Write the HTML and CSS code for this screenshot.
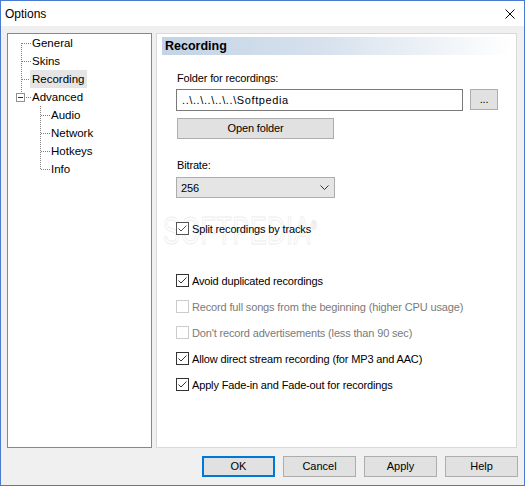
FILE: index.html
```html
<!DOCTYPE html>
<html>
<head>
<meta charset="utf-8">
<link rel="stylesheet" href="styles.css">
</head>
<body>
<div class="window">
  <div class="titlebar">
    <span class="title">Options</span>
    <svg class="close" width="10" height="10" viewBox="0 0 10 10"><path d="M0.5 0.5 L9.5 9.5 M9.5 0.5 L0.5 9.5" stroke="#000" stroke-width="1" fill="none"/></svg>
  </div>
  <div class="main">
    <div class="tree">
      <svg class="tree-lines" width="143" height="413" viewBox="0 0 143 413">
        <g stroke="#808080" stroke-width="1" stroke-dasharray="1 1" fill="none" shape-rendering="crispEdges">
          <line x1="13.5" y1="9" x2="13.5" y2="59"/>
          <line x1="14" y1="9.5" x2="23" y2="9.5"/>
          <line x1="14" y1="27.5" x2="23" y2="27.5"/>
          <line x1="14" y1="45.5" x2="23" y2="45.5"/>
          <line x1="18" y1="63.5" x2="23" y2="63.5"/>
          <line x1="32.5" y1="72" x2="32.5" y2="136"/>
          <line x1="33" y1="81.5" x2="42" y2="81.5"/>
          <line x1="33" y1="99.5" x2="42" y2="99.5"/>
          <line x1="33" y1="117.5" x2="42" y2="117.5"/>
          <line x1="33" y1="135.5" x2="42" y2="135.5"/>
        </g>
        <rect x="8.5" y="59.5" width="8" height="8" fill="#fff" stroke="#919191" shape-rendering="crispEdges"/>
        <line x1="10" y1="63.5" x2="15" y2="63.5" stroke="#1f2f5f" shape-rendering="crispEdges"/>
      </svg>
      <div class="node"><span class="label">General</span></div>
      <div class="node"><span class="label">Skins</span></div>
      <div class="node"><span class="label selected">Recording</span></div>
      <div class="node"><span class="label">Advanced</span></div>
      <div class="node child"><span class="label">Audio</span></div>
      <div class="node child"><span class="label">Network</span></div>
      <div class="node child"><span class="label">Hotkeys</span></div>
      <div class="node child"><span class="label">Info</span></div>
    </div>
    <div class="panel">
      <div class="header">Recording</div>
      <div class="content">
        <div class="field-label">Folder for recordings:</div>
        <div class="folder-row">
          <div class="textbox">..\..\..\..\..\Softpedia</div>
          <div class="btn browse">...</div>
        </div>
        <div class="btn open">Open folder</div>
        <div class="field-label bitrate-label">Bitrate:</div>
        <div class="combo">
          <span>256</span>
          <svg width="9" height="5" viewBox="0 0 9 5"><path d="M0.5 0.5 L4.5 4.5 L8.5 0.5" stroke="#333" stroke-width="1" fill="none"/></svg>
        </div>
        <div class="check split">
          <span class="box checked"><svg width="11" height="11" viewBox="0 0 11 11"><path d="M1.5 5.5 L4 8 L9.5 2.5" stroke="#555" stroke-width="1" fill="none"/></svg></span>
          <span>Split recordings by tracks</span>
        </div>
        <div class="check first">
          <span class="box checked"><svg width="11" height="11" viewBox="0 0 11 11"><path d="M1.5 5.5 L4 8 L9.5 2.5" stroke="#333" stroke-width="1" fill="none"/></svg></span>
          <span>Avoid duplicated recordings</span>
        </div>
        <div class="check disabled">
          <span class="box"></span>
          <span>Record full songs from the beginning (higher CPU usage)</span>
        </div>
        <div class="check disabled">
          <span class="box"></span>
          <span>Don't record advertisements (less than 90 sec)</span>
        </div>
        <div class="check">
          <span class="box checked"><svg width="11" height="11" viewBox="0 0 11 11"><path d="M1.5 5.5 L4 8 L9.5 2.5" stroke="#333" stroke-width="1" fill="none"/></svg></span>
          <span>Allow direct stream recording (for MP3 and AAC)</span>
        </div>
        <div class="check">
          <span class="box checked"><svg width="11" height="11" viewBox="0 0 11 11"><path d="M1.5 5.5 L4 8 L9.5 2.5" stroke="#333" stroke-width="1" fill="none"/></svg></span>
          <span>Apply Fade-in and Fade-out for recordings</span>
        </div>
      </div>
      <div class="watermark">SOFTPEDIA<sup>®</sup></div>
    </div>
  </div>
  <div class="buttons">
    <div class="btn dlg default">OK</div>
    <div class="btn dlg">Cancel</div>
    <div class="btn dlg">Apply</div>
    <div class="btn dlg">Help</div>
  </div>
</div>
</body>
</html>
```
FILE: styles.css
```css
* { box-sizing: border-box; }
html, body { margin: 0; padding: 0; }
body {
  font-family: "Liberation Sans", Arial, sans-serif;
  font-size: 11px;
  color: #000;
  background: #f0f0f0;
}
.window {
  width: 525px;
  height: 486px;
  border: 1px solid #4a7bd0;
  background: #f0f0f0;
  overflow: hidden;
}
.titlebar {
  height: 25px;
  background: #fff;
  display: flex;
  align-items: center;
}
.title {
  padding-left: 4px;
  font-size: 12px;
}
.close {
  margin-left: auto;
  margin-right: 9px;
}
.main {
  display: flex;
  gap: 4px;
  padding: 7px 0 0 6px;
}
.tree {
  position: relative;
  width: 145px;
  height: 415px;
  border: 1px solid #828790;
  background: #fff;
}
.tree-lines {
  position: absolute;
  left: 0;
  top: 0;
}
.node {
  position: relative;
  height: 18px;
  line-height: 18px;
  padding-left: 22px;
  font-size: 11.5px;
}
.node.child { padding-left: 41px; }
.label {
  display: inline-block;
  padding: 0 3px 0 2px;
  height: 18px;
}
.label.selected { background: #e5e5e5; }
.panel {
  position: relative;
  width: 361px;
  height: 415px;
  border: 1px solid #d9d9d9;
  background: #fff;
  padding: 3px 3px 0 5px;
}
.header {
  height: 18px;
  line-height: 18px;
  padding-left: 3px;
  font-weight: bold;
  font-size: 12.5px;
  background: linear-gradient(to right, #c3d3e5 0%, #d6e1ed 45%, #ffffff 100%);
}
.content {
  position: relative;
  z-index: 1;
  padding-left: 14px;
  letter-spacing: -0.15px;
}
.field-label {
  margin-top: 15px;
  line-height: 16px;
  padding-left: 1px;
}
.bitrate-label { margin-top: 18px; }
.folder-row {
  display: flex;
  gap: 7px;
  margin-top: 3px;
}
.textbox {
  width: 287px;
  height: 22px;
  border: 1px solid #7a7a7a;
  padding-left: 5px;
  line-height: 20px;
  background: #fff;
  letter-spacing: 0.6px;
}
.btn {
  background: #e1e1e1;
  border: 1px solid #adadad;
  height: 21px;
  line-height: 19px;
  text-align: center;
}
.btn.browse { width: 28px; }
.btn.open {
  width: 157px;
  margin-top: 7px;
  margin-left: 1px;
}
.combo {
  margin-top: 4px;
  width: 159px;
  height: 21px;
  background: #e5e5e5;
  border: 1px solid #adadad;
  padding: 0 5px 0 4px;
  display: flex;
  align-items: center;
  justify-content: space-between;
}
.check {
  display: flex;
  align-items: center;
  gap: 3px;
  height: 17px;
  margin-top: 9px;
}
.check.split { margin-top: 22px; }
.check.first { margin-top: 35px; }
.box {
  width: 13px;
  height: 13px;
  border: 1px solid #333;
  background: #fff;
  display: flex;
  align-items: center;
  justify-content: center;
}
.check.split .box { border-color: #555; }
.check.disabled { color: #7a7a7a; }
.check.disabled .box { border-color: #cccccc; }
.watermark {
  position: absolute;
  left: 6px;
  top: 176px;
  font-family: "Liberation Sans", Arial, sans-serif;
  font-size: 38px;
  letter-spacing: 1px;
  color: rgba(255,255,255,0);
  -webkit-text-stroke: 1px #eeeeee;
  transform: scaleX(0.66);
  transform-origin: left top;
  z-index: 0;
}
.watermark sup { font-size: 12px; }
.buttons {
  display: flex;
  justify-content: flex-end;
  gap: 8px;
  margin-top: 8px;
  padding-right: 6px;
}
.btn.dlg { width: 73px; }
.btn.default {
  border: 2px solid #0078d7;
  line-height: 17px;
}
```
